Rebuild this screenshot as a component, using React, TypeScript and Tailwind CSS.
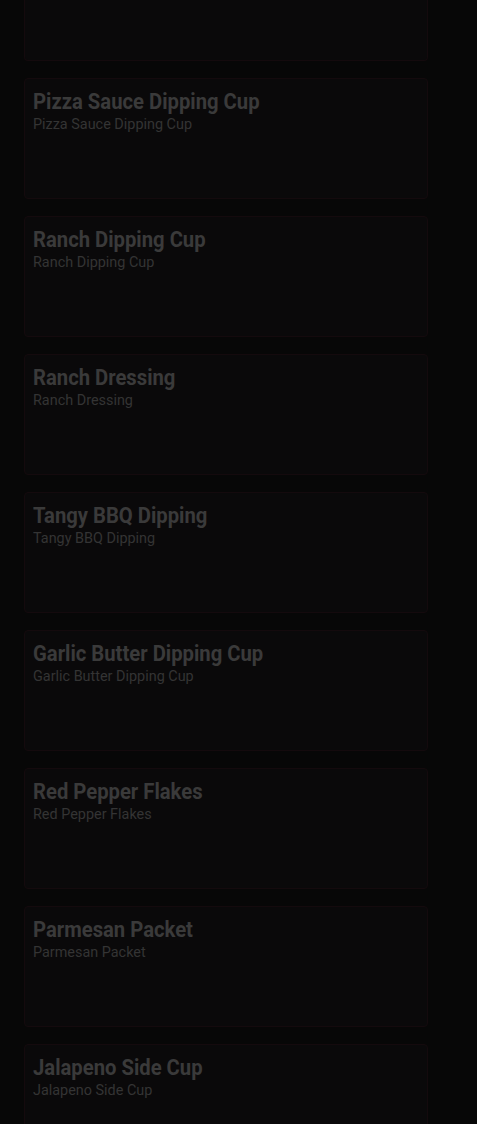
import React from "react";

const items = [
  "Pizza Sauce Dipping Cup",
  "Ranch Dipping Cup",
  "Ranch Dressing",
  "Tangy BBQ Dipping",
  "Garlic Butter Dipping Cup",
  "Red Pepper Flakes",
  "Parmesan Packet",
  "Jalapeno Side Cup",
];

export default function App() {
  return (
    <div
      className="h-[1124px] w-[477px] overflow-hidden bg-[#070707]"
      style={{ fontFamily: "Roboto, 'Liberation Sans', sans-serif" }}
    >
      <div className="flex flex-col gap-[17px] pl-[24px]">
        <div className="h-[61px] w-[404px] rounded-b-[4px] border border-t-0 border-[#140a0d] bg-[#0a090a]" />
        {items.map((name) => (
          <div
            key={name}
            className="h-[121px] w-[404px] rounded-[4px] border border-[#140a0d] bg-[#0a090a] px-[8px] pt-[10px]"
          >
            <div className="origin-left scale-x-[0.92] whitespace-nowrap text-[22px] font-bold leading-[26px] text-[#3a3a3a]">
              {name}
            </div>
            <div className="origin-left scale-x-[0.96] whitespace-nowrap text-[15px] leading-[18px] text-[#343434]">
              {name}
            </div>
          </div>
        ))}
      </div>
    </div>
  );
}
